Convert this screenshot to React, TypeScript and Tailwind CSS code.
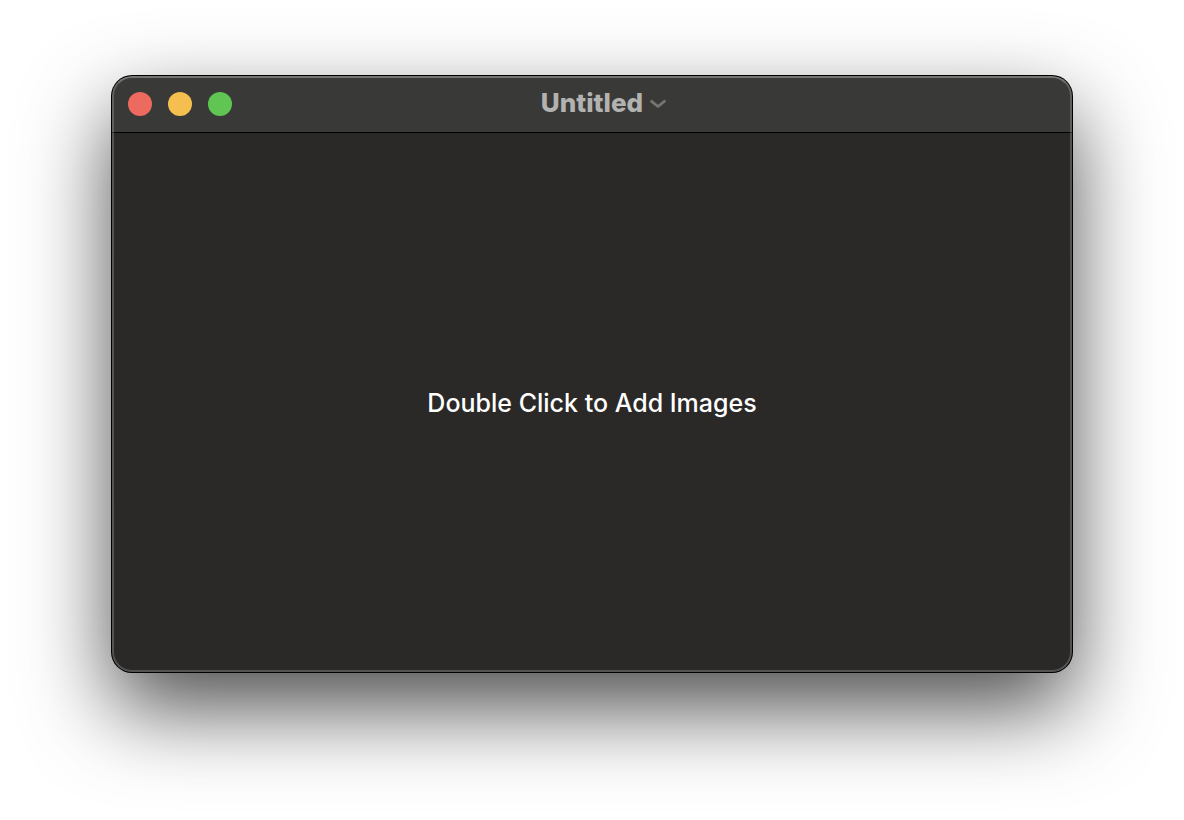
import type { ReactNode } from 'react';

const windowControls = [
  { label: 'Close', color: 'bg-[#ed6a5f]' },
  { label: 'Minimize', color: 'bg-[#f5bf4f]' },
  { label: 'Zoom', color: 'bg-[#61c554]' },
];

function TitleBar({ title }: { title: string }) {
  return (
    <header className="grid h-14 shrink-0 grid-cols-[1fr_auto_1fr] items-center bg-[#393937]">
      <div className="flex items-center gap-4 pl-4">
        {windowControls.map(({ label, color }) => (
          <button
            key={label}
            type="button"
            aria-label={label}
            className={`size-6 rounded-full ${color}`}
          />
        ))}
      </div>
      <h1 className="pb-0.5 text-[26px] leading-8 font-extrabold text-[#b2b2b0]">{title}</h1>
      <button type="button" aria-label="Document options" className="ml-[7px] w-4 text-[#757573]">
        <svg viewBox="0 0 16 10" className="h-2.5 w-4" fill="none" aria-hidden="true">
          <path
            d="M1.6 2.3 8 7.5l6.4-5.2"
            stroke="currentColor"
            strokeWidth="2.8"
            strokeLinecap="round"
            strokeLinejoin="round"
          />
        </svg>
      </button>
    </header>
  );
}

function DocumentWindow({ title, children }: { title: string; children: ReactNode }) {
  return (
    <section className="relative flex flex-1 flex-col overflow-hidden rounded-[20px] bg-[#2a2927] shadow-[0_0_0_1px_#000,0_36px_86px_rgba(0,0,0,0.7)]">
      <TitleBar title={title} />
      <div className="flex flex-1 items-center justify-center border-t border-black">{children}</div>
      {/* Bevel around the window edge */}
      <div className="pointer-events-none absolute inset-0 rounded-[20px] border-2 border-white/20 border-t-white/30" />
    </section>
  );
}

export default function App() {
  return (
    <main className="flex min-h-screen flex-col overflow-hidden bg-white px-28 pt-[76px] pb-[148px] font-['Inter',sans-serif]">
      <DocumentWindow title="Untitled">
        <p className="text-[25px] leading-8 font-medium text-white">Double Click to Add Images</p>
      </DocumentWindow>
    </main>
  );
}
